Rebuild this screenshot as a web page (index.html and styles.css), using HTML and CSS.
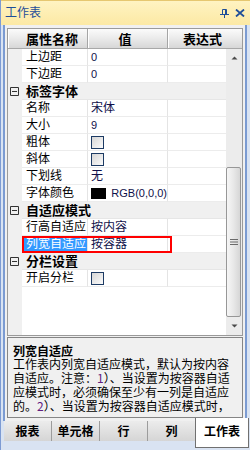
FILE: index.html
```html
<!DOCTYPE html>
<html lang="zh-CN">
  <head>
    <meta charset="UTF-8" />
    <title>工作表</title>
    <link rel="stylesheet" href="styles.css">
  </head>
  <body>
    <div class="window">
      <!-- Title bar -->
      <div class="titlebar">
        <span class="title">工作表</span>
        <span class="title-buttons">
          <svg class="pin" width="9" height="9" viewBox="0 0 9 9">
            <path d="M2.5 0.5 H6.5 V5.5 H2.5 Z" fill="none" stroke="#1f4e99" stroke-width="1" />
            <path d="M5.5 0.5 V5.5" stroke="#1f4e99" stroke-width="1" />
            <path d="M0 5.5 H9" stroke="#1f4e99" stroke-width="1" />
            <path d="M4.5 6 V9" stroke="#1f4e99" stroke-width="1" />
          </svg>
          <svg class="close" width="10" height="8" viewBox="0 0 10 8">
            <path d="M1 0.5 L9 7.5 M9 0.5 L1 7.5" stroke="#1f4e99" stroke-width="1.8" />
          </svg>
        </span>
      </div>

      <div class="frame">
        <!-- Property grid -->
        <div class="grid">
          <div class="grid-head">
            <div class="head-cell head-name">属性名称</div>
            <div class="head-cell head-value">值</div>
            <div class="head-cell head-expr">表达式</div>
          </div>

          <div class="grid-body">
            <div class="grid-rows">
              <div class="row"><div class="gutter"></div><div class="cell name">上边距</div><div class="cell value num">0</div><div class="cell expr"></div></div>
              <div class="row"><div class="gutter"></div><div class="cell name">下边距</div><div class="cell value num">0</div><div class="cell expr"></div></div>

              <div class="row section">
                <div class="gutter"><svg class="collapse" width="9" height="9" viewBox="0 0 9 9"><path d="M0.5 0.5 H8.5 V8.5 H0.5 Z M2 4.5 H7" fill="none" stroke="#333" stroke-width="1" /></svg></div>
                <div class="section-title">标签字体</div>
              </div>
              <div class="row"><div class="gutter"></div><div class="cell name">名称</div><div class="cell value">宋体</div><div class="cell expr"></div></div>
              <div class="row"><div class="gutter"></div><div class="cell name">大小</div><div class="cell value num">9</div><div class="cell expr"></div></div>
              <div class="row"><div class="gutter"></div><div class="cell name">粗体</div><div class="cell value"><span class="checkbox"></span></div><div class="cell expr"></div></div>
              <div class="row"><div class="gutter"></div><div class="cell name">斜体</div><div class="cell value"><span class="checkbox"></span></div><div class="cell expr"></div></div>
              <div class="row"><div class="gutter"></div><div class="cell name">下划线</div><div class="cell value">无</div><div class="cell expr"></div></div>
              <div class="row"><div class="gutter"></div><div class="cell name">字体颜色</div><div class="cell value num"><span class="swatch"></span>RGB(0,0,0)</div><div class="cell expr"></div></div>

              <div class="row section">
                <div class="gutter"><svg class="collapse" width="9" height="9" viewBox="0 0 9 9"><path d="M0.5 0.5 H8.5 V8.5 H0.5 Z M2 4.5 H7" fill="none" stroke="#333" stroke-width="1" /></svg></div>
                <div class="section-title">自适应模式</div>
              </div>
              <div class="row"><div class="gutter"></div><div class="cell name">行高自适应</div><div class="cell value">按内容</div><div class="cell expr"></div></div>
              <div class="row current">
                <div class="gutter"></div><div class="cell name selected">列宽自适应</div><div class="cell value">按容器</div><div class="cell expr"></div>
                <div class="mark-box"></div>
              </div>

              <div class="row section">
                <div class="gutter"><svg class="collapse" width="9" height="9" viewBox="0 0 9 9"><path d="M0.5 0.5 H8.5 V8.5 H0.5 Z M2 4.5 H7" fill="none" stroke="#333" stroke-width="1" /></svg></div>
                <div class="section-title">分栏设置</div>
              </div>
              <div class="row"><div class="gutter"></div><div class="cell name">开启分栏</div><div class="cell value"><span class="checkbox"></span></div><div class="cell expr"></div></div>

              <div class="filler"><div class="gutter"></div></div>
            </div>

            <!-- Scrollbar -->
            <div class="scrollbar">
              <div class="scroll-btn">
                <svg width="7" height="4" viewBox="0 0 7 4"><path d="M0.5 3.5 L3.5 0.5 L6.5 3.5 Z" fill="#4a4a4a" /></svg>
              </div>
              <div class="thumb">
                <svg width="8" height="7" viewBox="0 0 8 7"><path d="M0 0.5 H8 M0 3 H8 M0 5.5 H8" stroke="#6a6a6a" stroke-width="1" /></svg>
              </div>
              <div class="scroll-btn down">
                <svg width="7" height="4" viewBox="0 0 7 4"><path d="M0.5 0.5 L6.5 0.5 L3.5 3.5 Z" fill="#4a4a4a" /></svg>
              </div>
            </div>
          </div>
        </div>

        <!-- Description -->
        <div class="desc">
          <div class="desc-title">列宽自适应</div>
          <div class="desc-text">工作表内列宽自适应模式，默认为按内容<br>自适应。注意：<span class="step">1</span>）、当设置为按容器自适<br>应模式时，必须确保至少有一列是自适应<br>的。<span class="step">2</span>）、当设置为按容器自适应模式时，</div>
        </div>
      </div>

      <!-- Bottom tabs -->
      <div class="tabs">
        <div class="tab">报表</div>
        <div class="tab">单元格</div>
        <div class="tab">行</div>
        <div class="tab">列</div>
        <div class="tab active">工作表</div>
      </div>
    </div>
  </body>
</html>
```

FILE: styles.css
```css
body {
  margin: 0;
  font-family: "Liberation Sans", "Noto Sans CJK SC", sans-serif;
  font-size: 12px;
  color: #000;
  background-color: #d9e3f2;
}

.window {
  width: 250px;
  height: 450px;
  box-sizing: border-box;
  border-left: 1px solid #7d9bd3;
  background-color: #d9e3f2;
  display: flex;
  flex-direction: column;
  overflow: hidden;
}

/* Title bar */
.titlebar {
  height: 25px;
  flex: none;
  box-sizing: border-box;
  border-top: 1px solid #e6c770;
  background: linear-gradient(#fff3c2, #fce9a4);
  display: flex;
  align-items: center;
  justify-content: space-between;
  padding: 0 5px 0 4px;
}

.title {
  color: #1f4e99;
  font-size: 12px;
  line-height: 14px;
}

.title-buttons {
  display: flex;
  align-items: center;
  gap: 6px;
}

.title-buttons svg {
  display: block;
}

/* Frame around grid + description */
.frame {
  flex: none;
  margin: 0 3px 0 2px;
  border-left: 2px solid #7b9bd2;
  border-right: 2px solid #7b9bd2;
  background-color: #f0f0f0;
  padding: 3px 2px;
}

.grid {
  height: 308px;
  box-sizing: border-box;
  border: 1px solid #9a9a9a;
  background-color: #fff;
  display: flex;
  flex-direction: column;
}

.grid-head {
  display: flex;
  height: 20px;
  flex: none;
  box-sizing: border-box;
  border-bottom: 1px solid #a8a8a8;
}

.head-cell {
  box-sizing: border-box;
  background: linear-gradient(#fbfbfb, #ececec 45%, #d7d7d7);
  border-right: 1px solid #a5a5a5;
  box-shadow: inset 1px 0 #fff;
  font-family: "Noto Sans CJK SC", sans-serif;
  font-size: 13px;
  font-weight: bold;
  line-height: 19px;
  text-align: center;
}

.head-name {
  width: 80px;
  padding-left: 9px;
}

.head-value {
  width: 80px;
  padding-right: 5px;
}

.head-expr {
  flex: 1;
  border-right: none;
  padding-right: 5px;
}

.grid-body {
  flex: 1;
  display: flex;
  min-height: 0;
}

.grid-rows {
  flex: 1;
  display: flex;
  flex-direction: column;
}

.row {
  display: flex;
  height: 17px;
  flex: none;
  position: relative;
}

.gutter {
  width: 14px;
  flex: none;
  background-color: #f0f0f0;
}

.cell {
  box-sizing: border-box;
  border-bottom: 1px solid #ececec;
  border-right: 1px solid #e4e4e4;
  line-height: 16px;
  white-space: nowrap;
  overflow: hidden;
}

.name {
  width: 66px;
  padding-left: 4px;
}

.value {
  width: 80px;
  padding-left: 3px;
  color: #10104a;
  display: flex;
  align-items: center;
}

.expr {
  flex: 1;
  border-right: none;
}

.num {
  font-size: 11px;
}

.checkbox {
  width: 13px;
  height: 13px;
  box-sizing: border-box;
  border: 1px solid #1d3b64;
  background: linear-gradient(to bottom right, #d6d6d6, #fbfbfb);
}

.swatch {
  width: 16px;
  height: 11px;
  background-color: #000;
  margin-right: 5px;
}

/* Category rows */
.section .gutter {
  display: flex;
  align-items: center;
  padding-left: 2px;
  box-sizing: border-box;
}

.section-title {
  flex: 1;
  background-color: #f0f0f0;
  border-bottom: 1px solid #e6e6e6;
  box-sizing: border-box;
  padding-left: 4px;
  font-family: "Noto Sans CJK SC", sans-serif;
  font-size: 13px;
  font-weight: bold;
  line-height: 16px;
}

.name.selected {
  background-color: #3399ff;
  color: #fff;
}

/* red annotation box over the current row */
.mark-box {
  position: absolute;
  left: 14px;
  top: 0;
  width: 150px;
  height: 17px;
  box-sizing: border-box;
  border: 2px solid #f00;
}

.filler {
  flex: 1;
  display: flex;
}

/* Scrollbar */
.scrollbar {
  width: 16px;
  flex: none;
  background-color: #ececec;
  display: flex;
  flex-direction: column;
}

.scroll-btn {
  height: 17px;
  display: flex;
  align-items: center;
  justify-content: center;
  padding-left: 1px;
}

.scroll-btn.down {
  height: 18px;
  margin-top: auto;
}

.thumb {
  margin-top: 101px;
  height: 150px;
  width: 15px;
  box-sizing: border-box;
  border: 1px solid #979797;
  border-radius: 2px;
  background: linear-gradient(to right, #f6f6f6, #e8e8e8 50%, #d6d6d6);
  display: flex;
  align-items: center;
  justify-content: center;
}

/* Description panel */
.desc {
  margin-top: 1px;
  height: 81px;
  box-sizing: border-box;
  border: 1px solid #858585;
  background-color: #f0f0f0;
  padding: 6px 4px 0 5px;
  overflow: hidden;
  font-family: "Noto Sans CJK SC", sans-serif;
  white-space: nowrap;
}

.desc-title {
  font-size: 12px;
  font-weight: bold;
  line-height: 13px;
}

.desc-text {
  font-size: 12px;
  line-height: 14px;
}

.step {
  color: #602080;
}

/* Bottom tabs */
.tabs {
  flex: none;
  height: 29px;
  display: flex;
  align-items: flex-start;
  padding-left: 3px;
}

.tab {
  width: 48px;
  height: 20px;
  box-sizing: border-box;
  background: linear-gradient(#ececec, #d5d5d5);
  border-right: 1px solid #9c9c9c;
  font-family: "Noto Sans CJK SC", sans-serif;
  font-weight: bold;
  line-height: 20px;
  text-align: center;
}

.tab.active {
  width: 54px;
  height: 30px;
  margin-top: -3px;
  margin-left: -1px;
  padding-top: 3px;
  background: #fff;
  border: 1px solid #707070;
  border-top: none;
}
```
